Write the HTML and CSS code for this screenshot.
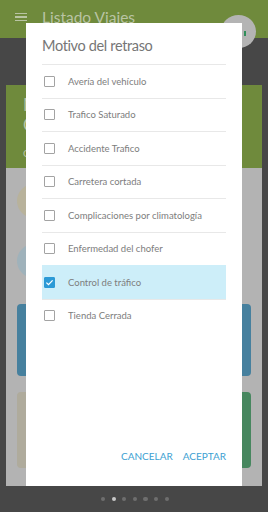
FILE: index.html
```html
<!DOCTYPE html>
<html lang="es">
<head>
<meta charset="utf-8">
<link rel="stylesheet" href="styles.css">
</head>
<body>
<div class="screen">
  <header class="appbar">
    <div class="menu"><span></span><span></span><span></span></div>
    <div class="apptitle">Listado Viajes</div>
  </header>
  <div class="fab"><span class="fab-mark"></span></div>

  <main class="card">
    <div class="card-head">
      <div class="ch-title">Mi viaje</div>
      <div class="ch-sub">Cliente</div>
      <div class="ch-small">Código</div>
    </div>
    <div class="card-body">
      <div class="avatar beige"></div>
      <div class="avatar blue"></div>
      <div class="tile tile-blue"></div>
      <div class="tile-row">
        <div class="tile tile-beige"></div>
        <div class="tile tile-green"></div>
      </div>
    </div>
  </main>

  <div class="dots">
    <span></span><span class="on"></span><span></span><span></span><span></span><span></span><span></span>
  </div>

  <section class="dialog">
    <h2 class="dtitle">Motivo del retraso</h2>
    <ul class="opts">
      <li class="opt"><span class="cb"></span><span class="lbl">Avería del vehículo</span></li>
      <li class="opt"><span class="cb"></span><span class="lbl">Trafico Saturado</span></li>
      <li class="opt"><span class="cb"></span><span class="lbl">Accidente Trafico</span></li>
      <li class="opt"><span class="cb"></span><span class="lbl">Carretera cortada</span></li>
      <li class="opt"><span class="cb"></span><span class="lbl">Complicaciones por climatología</span></li>
      <li class="opt"><span class="cb"></span><span class="lbl">Enfermedad del chofer</span></li>
      <li class="opt selected"><span class="cb checked"><svg viewBox="0 0 11 11" width="11" height="11"><path d="M2.4 5.6 L4.5 7.6 L8.6 3.4" fill="none" stroke="#fff" stroke-width="1.3"/></svg></span><span class="lbl">Control de tráfico</span></li>
      <li class="opt last"><span class="cb"></span><span class="lbl">Tienda Cerrada</span></li>
    </ul>
    <div class="actions">
      <span class="btn">CANCELAR</span>
      <span class="btn">ACEPTAR</span>
    </div>
  </section>
</div>
</body>
</html>
```

FILE: styles.css
```css
* { box-sizing: border-box; }
html, body { margin: 0; padding: 0; }
body {
  width: 268px;
  height: 512px;
  background: #474747;
  font-family: Lato, "Open Sans", sans-serif;
  overflow: hidden;
}
.screen {
  position: relative;
  width: 268px;
  height: 512px;
}
.appbar {
  height: 38px;
  background: #6f8a3c;
  display: flex;
  align-items: center;
  padding-left: 15px;
}
.menu {
  width: 12px;
  display: flex;
  flex-direction: column;
  gap: 2px;
  margin-top: -4px;
}
.menu span {
  display: block;
  height: 1.5px;
  background: #b9c4a4;
}
.apptitle {
  margin-left: 15px;
  margin-top: -4px;
  font-size: 15.5px;
  color: #b9c4a4;
}
.fab {
  position: absolute;
  left: 221px;
  top: 15px;
  width: 35px;
  height: 33px;
  border-radius: 50%;
  background: #b4b4b4;
}
.fab-mark {
  position: absolute;
  right: 10px;
  top: 16px;
  width: 2px;
  height: 5px;
  background: #2f8f5a;
}
.card {
  margin: 47px 6px 0 6px;
  height: 401px;
  display: flex;
  flex-direction: column;
}
.card-head {
  height: 83px;
  background: #6f8a3c;
  padding: 10px 0 0 17px;
  color: #b9c4a4;
}
.ch-title { font-size: 17px; line-height: 20px; }
.ch-sub { font-size: 17px; line-height: 20px; }
.ch-small { font-size: 10px; margin-top: 12px; }
.card-body {
  flex: 1;
  background: #b3b3b3;
  padding: 16px 11px 0 11px;
  display: flex;
  flex-direction: column;
}
.avatar {
  width: 34px;
  height: 34px;
  border-radius: 50%;
}
.avatar.beige { background: #b8b29b; }
.avatar.blue { background: #9fb2bb; margin-top: 26px; }
.tile { border-radius: 4px; }
.tile-blue {
  margin-top: 26px;
  height: 72px;
  background: #46809e;
}
.tile-row {
  margin-top: 16px;
  display: flex;
  gap: 8px;
  height: 76px;
}
.tile-beige { flex: 1; background: #afab9c; }
.tile-green { flex: 1; background: #47875f; }
.dots {
  position: absolute;
  left: 101px;
  top: 497px;
  display: flex;
  gap: 6.3px;
}
.dots span {
  width: 4.3px;
  height: 4.3px;
  border-radius: 50%;
  background: #6e6e6e;
}
.dots span.on { background: #c8c8c8; }

.dialog {
  position: absolute;
  left: 26px;
  top: 23px;
  width: 216px;
  height: 463px;
  background: #ffffff;
  padding: 0 16px;
  display: flex;
  flex-direction: column;
}
.dtitle {
  margin: 0;
  height: 41px;
  padding-top: 13px;
  font-weight: normal;
  font-size: 14.5px;
  letter-spacing: -0.35px;
  line-height: 20px;
  color: #767676;
}
.opts {
  list-style: none;
  margin: 0;
  padding: 0;
}
.opt {
  height: 33.5px;
  border-top: 1px solid #e8e8e8;
  display: flex;
  align-items: center;
  padding-left: 2px;
}
.opt.selected {
  background: #cdeef9;
  border-top-color: #cdeef9;
}
.cb {
  width: 11px;
  height: 11px;
  border: 1px solid #a3a3a3;
  border-radius: 1px;
  flex: none;
  display: flex;
}
.cb.checked {
  background: #2c9ad6;
  border-color: #2c9ad6;
}
.cb.checked svg { margin: -1px; }
.lbl {
  margin-left: 13px;
  font-size: 9.5px;
  color: #7d7d7d;
}
.actions {
  margin-top: auto;
  height: 45px;
  display: flex;
  justify-content: flex-end;
  gap: 10px;
  padding-top: 8px;
}
.btn {
  font-size: 10px;
  color: #3d9fd2;
  line-height: 14px;
}
```
